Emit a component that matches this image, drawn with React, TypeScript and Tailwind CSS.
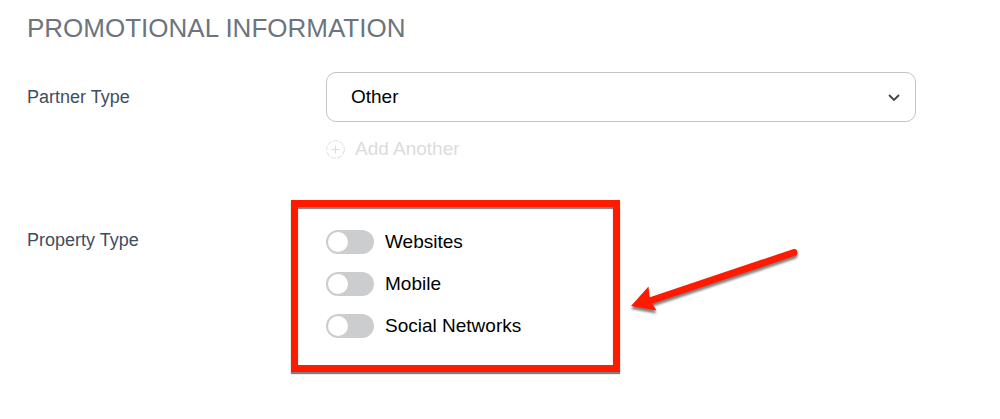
import { useState } from "react";

const PROPERTY_TYPES = ["Websites", "Mobile", "Social Networks"];
const PARTNER_TYPES = ["Other", "Blogger", "Publisher", "Agency"];

function Toggle({ label }: { label: string }) {
  const [on, setOn] = useState(false);
  return (
    <label className="flex cursor-pointer items-center gap-[11px] text-[19px] leading-6 text-black">
      <input
        type="checkbox"
        role="switch"
        checked={on}
        onChange={(e) => setOn(e.target.checked)}
        className="flex h-6 w-12 shrink-0 cursor-pointer appearance-none items-center rounded-full bg-[#cccdce] px-[2px] before:block before:size-[20px] before:rounded-full before:bg-white before:content-[''] checked:justify-end checked:bg-[#4a90e2]"
      />
      {label}
    </label>
  );
}

function Arrow() {
  return (
    <svg
      aria-hidden="true"
      viewBox="0 0 180 80"
      className="pointer-events-none absolute top-7 left-full ml-[7px] h-20 w-[180px] overflow-visible drop-shadow-[0_3px_1px_rgba(0,0,0,0.5)]"
    >
      <path d="M28 66.500 L174 17.500" stroke="#ff1a00" strokeWidth="7" strokeLinecap="round" />
      <path d="M11 71 L28.500 51.500 L29.500 61 L32 68 L36.500 75.500 Z" fill="#ff1a00" />
    </svg>
  );
}

export default function App() {
  return (
    <main className="bg-white pt-3 pr-[84px] pb-11 pl-[27px] font-['Liberation_Sans',Arial,sans-serif]">
      <h1 className="text-[26px] leading-8 text-[#6c757d]">PROMOTIONAL INFORMATION</h1>

      <div className="mt-7 grid grid-cols-[299px_1fr]">
        <label htmlFor="partner-type" className="text-[18px] leading-[50px] text-[#414d5c]">
          Partner Type
        </label>
        <div>
          <div className="grid items-center">
            <select
              id="partner-type"
              defaultValue="Other"
              className="col-start-1 row-start-1 h-[50px] w-full appearance-none rounded-[10px] border border-[#c4c4c4] bg-white px-6 text-[19px] text-black"
            >
              {PARTNER_TYPES.map((type) => (
                <option key={type}>{type}</option>
              ))}
            </select>
            <svg
              aria-hidden="true"
              viewBox="0 0 12 8"
              className="pointer-events-none col-start-1 row-start-1 mt-0.5 mr-4 h-2 w-3 justify-self-end"
              fill="none"
              stroke="#444"
              strokeWidth="1.800"
            >
              <path d="M1 1 L6 6 L11 1" />
            </svg>
          </div>
          <button
            type="button"
            disabled
            className="mt-[15px] flex items-center gap-[10px] text-[19px] leading-6 text-[#dcdcdc]"
          >
            <svg viewBox="0 0 19 19" className="size-[19px]" fill="none" stroke="currentColor" aria-hidden="true">
              <circle cx="9.500" cy="9.500" r="8.800" strokeDasharray="5 1.500" />
              <path d="M9.500 5.500 V13.500 M5.500 9.500 H13.500" />
            </svg>
            Add Another
          </button>
        </div>
      </div>

      <div className="mt-[39px] grid grid-cols-[299px_1fr]">
        <span id="property-type" className="pt-7 text-[18px] leading-6 text-[#414d5c]">
          Property Type
        </span>
        <div
          role="group"
          aria-labelledby="property-type"
          className="relative -ml-[35px] flex w-[329px] flex-col gap-[18px] border-[7px] border-[#ff1a00] pt-[23px] pb-[27px] pl-7 shadow-[0_2px_1px_rgba(0,0,0,0.5),inset_0_2px_1px_rgba(0,0,0,0.5)]"
        >
          {PROPERTY_TYPES.map((type) => (
            <Toggle key={type} label={type} />
          ))}
          <Arrow />
        </div>
      </div>
    </main>
  );
}
